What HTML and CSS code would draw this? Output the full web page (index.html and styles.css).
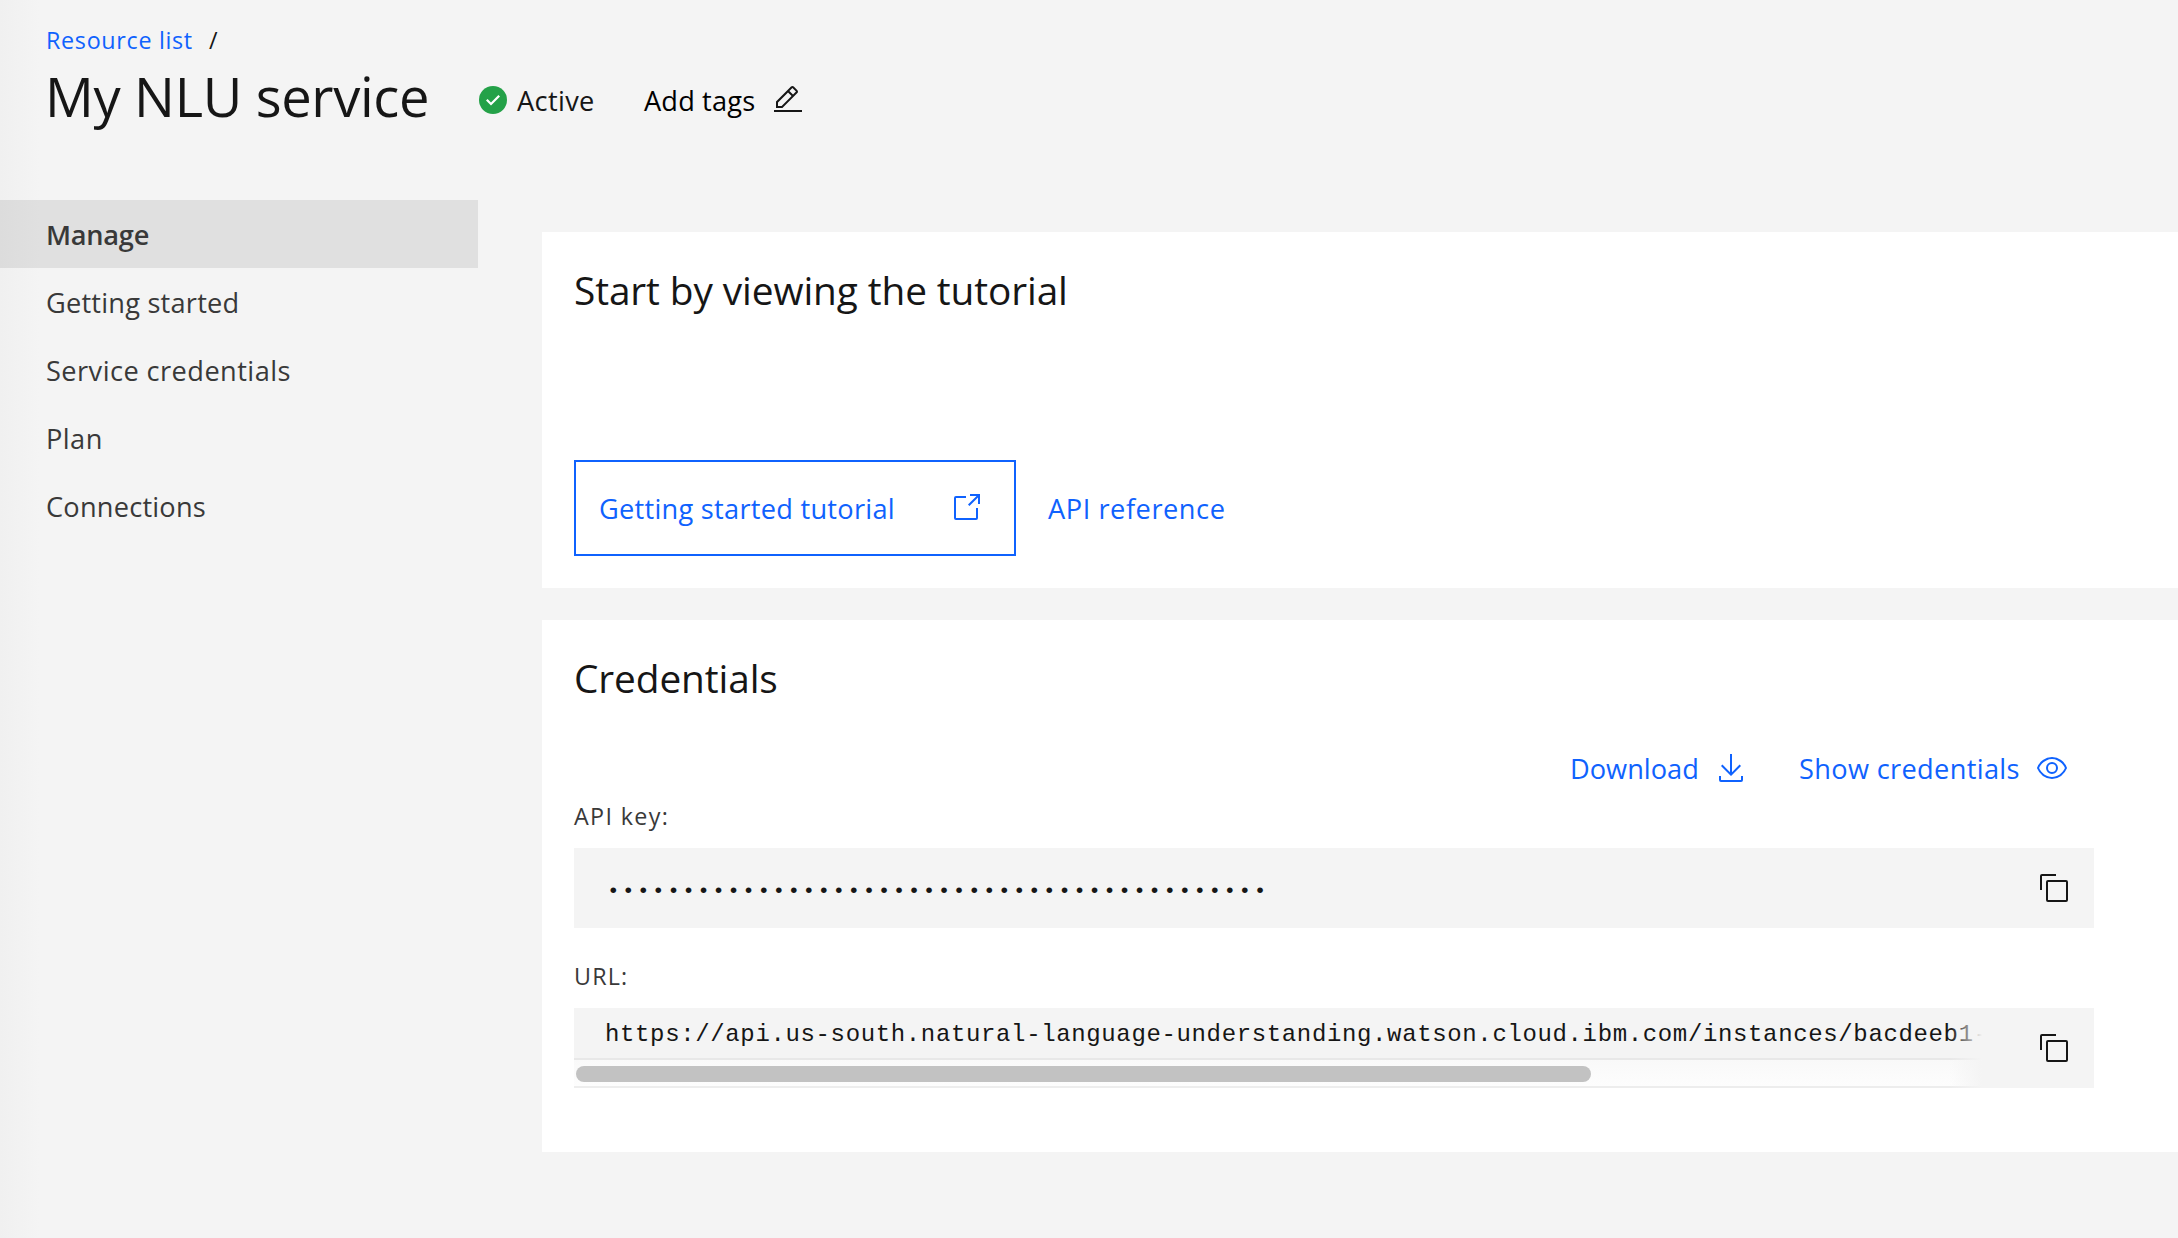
FILE: index.html
```html
<!DOCTYPE html>
<html lang="en">
<head>
<meta charset="utf-8">
<title>My NLU service</title>
<link rel="stylesheet" href="styles.css">
</head>
<body>
<header class="page-header">
  <nav class="breadcrumb">
    <a class="breadcrumb-link" href="#">Resource list</a>
    <span class="breadcrumb-slash">/</span>
  </nav>
  <div class="title-row">
    <h1 class="title">My NLU service</h1>
    <div class="status">
      <svg class="icon" viewBox="0 0 16 16"><circle cx="8" cy="8" r="7" fill="#24a148"/><path fill="#fff" d="M7 10.8 4.5 8.3l.8-.8L7 9.2l3.7-3.7.8.8z"/></svg>
      <span class="status-label">Active</span>
    </div>
    <button class="tags" type="button">
      <span class="tags-label">Add tags</span>
      <svg class="icon" viewBox="0 0 32 32"><path d="M2 26h28v2H2zM25.4 9c.8-.8.8-2 0-2.8l-3.6-3.6c-.8-.8-2-.8-2.8 0l-15 15V24h6.4l15-15zm-5-5L24 7.6l-3 3L17.4 7l3-3zM6 22v-3.6l10-10 3.6 3.6-10 10H6z"/></svg>
    </button>
  </div>
</header>
<div class="body">
  <nav class="sidebar">
    <a class="side-item side-item-current" href="#">Manage</a>
    <a class="side-item" href="#">Getting started</a>
    <a class="side-item side-item-loose" href="#">Service credentials</a>
    <a class="side-item side-item-loose" href="#">Plan</a>
    <a class="side-item" href="#">Connections</a>
  </nav>
  <main class="content">
    <section class="card">
      <h2 class="card-title">Start by viewing the tutorial</h2>
      <div class="tutorial-actions">
        <a class="outline-button" href="#">
          <span>Getting started tutorial</span>
          <svg class="icon" viewBox="0 0 32 32"><path d="M26 28H6a2 2 0 0 1-2-2V6a2 2 0 0 1 2-2h10v2H6v20h20V16h2v10a2 2 0 0 1-2 2z"/><path d="M20 2v2h6.586L18 12.586 19.414 14 28 5.414V12h2V2z"/></svg>
        </a>
        <a class="text-link" href="#">API reference</a>
      </div>
    </section>
    <section class="card card-credentials">
      <h2 class="card-title">Credentials</h2>
      <div class="credential-actions">
        <a class="action action-download" href="#">
          <span>Download</span>
          <svg class="icon" viewBox="0 0 32 32"><path d="M26 24v4H6v-4H4v4a2 2 0 0 0 2 2h20a2 2 0 0 0 2-2v-4zM26 14l-1.41-1.41L17 20.17V2h-2v18.17l-7.59-7.58L6 14l10 10z"/></svg>
        </a>
        <a class="action action-show" href="#">
          <span>Show credentials</span>
          <svg class="icon" viewBox="0 0 32 32"><path d="M30.94 15.66A16.69 16.69 0 0 0 16 5 16.69 16.69 0 0 0 1.06 15.66a1 1 0 0 0 0 .68A16.69 16.69 0 0 0 16 27a16.69 16.69 0 0 0 14.94-10.66 1 1 0 0 0 0-.68zM16 25c-5.3 0-10.9-3.93-12.93-9C5.1 10.93 10.7 7 16 7s10.9 3.93 12.93 9C26.9 21.07 21.3 25 16 25z"/><path d="M16 10a6 6 0 1 0 6 6 6 6 0 0 0-6-6zm0 10a4 4 0 1 1 4-4 4 4 0 0 1-4 4z"/></svg>
        </a>
      </div>
      <div class="label label-key">API key:</div>
      <div class="field">
        <div class="field-scroll">
          <div class="field-dots">••••••••••••••••••••••••••••••••••••••••••••</div>
        </div>
        <button class="copy" type="button">
          <svg class="icon" viewBox="0 0 32 32"><path d="M28 10v18H10V10h18m0-2H10a2 2 0 0 0-2 2v18a2 2 0 0 0 2 2h18a2 2 0 0 0 2-2V10a2 2 0 0 0-2-2z"/><path d="M4 18H2V4a2 2 0 0 1 2-2h14v2H4z"/></svg>
        </button>
      </div>
      <div class="label label-url">URL:</div>
      <div class="field">
        <div class="field-scroll">
          <div class="field-url">https://api.us-south.natural-language-understanding.watson.cloud.ibm.com/instances/bacdeeb1-</div>
          <div class="scrollbar"><div class="scrollbar-thumb"></div></div>
        </div>
        <button class="copy" type="button">
          <svg class="icon" viewBox="0 0 32 32"><path d="M28 10v18H10V10h18m0-2H10a2 2 0 0 0-2 2v18a2 2 0 0 0 2 2h18a2 2 0 0 0 2-2V10a2 2 0 0 0-2-2z"/><path d="M4 18H2V4a2 2 0 0 1 2-2h14v2H4z"/></svg>
        </button>
      </div>
    </section>
  </main>
</div>
</body>
</html>
```
FILE: styles.css
```css
* {
  box-sizing: border-box;
}

body {
  margin: 0;
  height: 1238px;
  overflow: hidden;
  background: #f4f4f4 linear-gradient(to right, #f0f0f0, #f4f4f4) no-repeat 0 0 / 40px 100%;
  color: #161616;
  font-family: "Open Sans", "Noto Sans", sans-serif;
  font-size: 27.2px;
}

a {
  color: #0f62fe;
  text-decoration: none;
}

button {
  margin: 0;
  padding: 0;
  border: 0;
  background: none;
  color: inherit;
  font: inherit;
}

.icon {
  display: block;
  flex: none;
  width: 32px;
  height: 32px;
  fill: currentColor;
}

.page-header {
  height: 200px;
  padding: 24px 0 0 46px;
}

.breadcrumb {
  display: flex;
  height: 36px;
  font-size: 23.3px;
  line-height: 32px;
}

.breadcrumb-link {
  width: 163px;
  letter-spacing: 0.69px;
}

.title-row {
  display: flex;
  height: 72px;
}

.title {
  width: 431px;
  margin: 0 0 0 -1px;
  font-size: 54.3px;
  font-weight: 400;
  line-height: 72px;
  letter-spacing: -0.34px;
  white-space: nowrap;
}

.status,
.tags {
  display: flex;
  align-items: center;
  margin-top: 8px;
}

.status {
  width: 167px;
  margin-left: 1px;
  gap: 8px;
  letter-spacing: 0.34px;
}

.tags {
  letter-spacing: 0.15px;
  text-align: left;
}

.tags-label {
  width: 128px;
  color: #000;
}

.body {
  display: flex;
}

.sidebar {
  flex: none;
  width: 478px;
  margin-right: 64px;
}

.side-item {
  display: block;
  height: 68px;
  padding-left: 46px;
  color: #393939;
  line-height: 69px;
  letter-spacing: 0.21px;
}

.side-item-loose {
  letter-spacing: 0.44px;
}

.side-item-current {
  background: linear-gradient(to right, #dcdcdc, #e0e0e0 40px);
  font-weight: 600;
  letter-spacing: -0.25px;
}

.content {
  display: flex;
  flex: 1;
  flex-direction: column;
  gap: 32px;
  min-width: 0;
  padding-top: 32px;
}

.card {
  height: 356px;
  padding: 32px 84px 0 32px;
  background: #fff;
}

.card-credentials {
  height: 532px;
}

.card-title {
  height: 56px;
  margin: 0;
  font-size: 38.8px;
  font-weight: 400;
  line-height: 52px;
  letter-spacing: -0.1px;
}

.tutorial-actions {
  display: flex;
  align-items: center;
  gap: 32px;
  height: 96px;
  margin-top: 140px;
  letter-spacing: 0.26px;
}

.outline-button {
  display: flex;
  align-items: center;
  justify-content: space-between;
  width: 442px;
  height: 96px;
  padding: 0 32px 0 23px;
  border: 2px solid #0f62fe;
}

.text-link {
  letter-spacing: 0.55px;
}

.credential-actions {
  display: flex;
  align-items: center;
  justify-content: flex-end;
  height: 32px;
  margin-top: 44px;
  padding-right: 26px;
}

.action {
  display: flex;
  align-items: center;
  justify-content: space-between;
}

.action-download {
  width: 177px;
  margin-right: 52px;
}

.action-show {
  width: 269px;
  letter-spacing: 0.33px;
}

.label {
  color: #393939;
  font-size: 23.3px;
  line-height: 32px;
  letter-spacing: 1.36px;
}

.label-key {
  height: 48px;
  margin-top: 16px;
}

.label-url {
  height: 48px;
  margin-top: 32px;
  letter-spacing: 1.2px;
}

.field {
  position: relative;
  display: flex;
  justify-content: flex-end;
  height: 80px;
  background: #f4f4f4;
}

.field-scroll {
  flex: 1;
  min-width: 0;
  overflow: hidden;
  font-family: "Liberation Mono", monospace;
}

.field-scroll::after {
  content: "";
  position: absolute;
  top: 0;
  right: 112px;
  width: 32px;
  height: 80px;
  background: linear-gradient(to right, rgba(244, 244, 244, 0), #f4f4f4);
}

.field-dots {
  padding-left: 33px;
  font-size: 21px;
  line-height: 87px;
  letter-spacing: 2.436px;
}

.field-url {
  height: 50px;
  padding-left: 31px;
  font-size: 24px;
  line-height: 54px;
  letter-spacing: 0.638px;
  white-space: nowrap;
}

.scrollbar {
  height: 30px;
  padding: 6px 2px;
  border-top: 2px solid #e8e8e8;
  border-bottom: 2px solid #ededed;
  background: linear-gradient(#f9f9f9, #fdfdfd);
}

.scrollbar-thumb {
  width: 1015px;
  height: 16px;
  border-radius: 8px;
  background: #c2c2c2;
}

.copy {
  display: flex;
  align-items: center;
  width: 112px;
  height: 80px;
  padding-left: 56px;
}
```
